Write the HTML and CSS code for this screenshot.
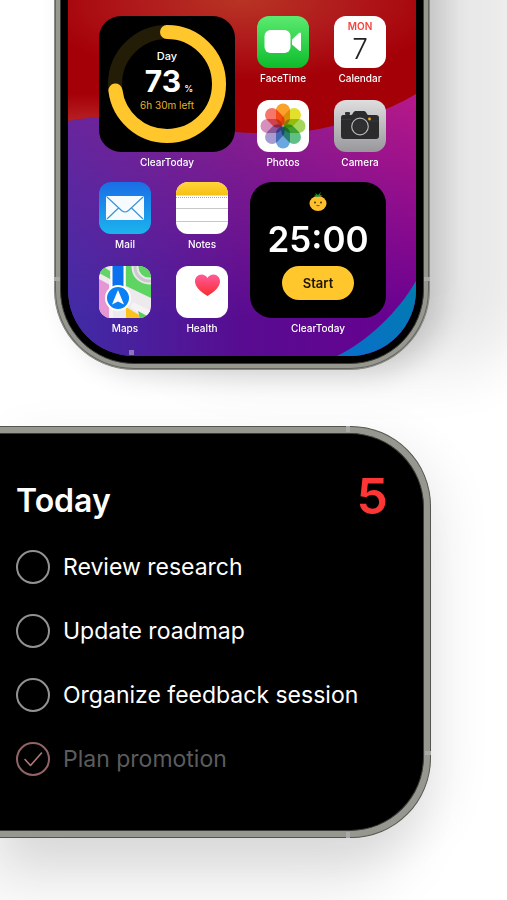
FILE: index.html
```html
<!DOCTYPE html>
<html lang="en">
<head>
    <meta charset="UTF-8">
    <meta name="viewport" content="width=device-width, initial-scale=1">
    <title>ClearToday</title>
    <link rel="stylesheet" href="styles.css">
</head>
<body>
    <main class="showcase">
        <!-- Home screen with widgets -->
        <section class="phone">
            <span class="antenna antenna-left"></span>
            <span class="antenna antenna-right"></span>
            <div class="bezel">
                <div class="screen">
                    <svg class="wallpaper" viewBox="0 0 348 356" preserveAspectRatio="none" aria-hidden="true">
                        <defs>
                            <linearGradient id="purple" x1="0" y1="0" x2="1" y2="0">
                                <stop offset="0" stop-color="#6b259c"/>
                                <stop offset="0.5" stop-color="#8a2090"/>
                                <stop offset="1" stop-color="#b4188a"/>
                            </linearGradient>
                            <linearGradient id="dusk" x1="0" y1="0" x2="1" y2="0">
                                <stop offset="0" stop-color="#402ca6"/>
                                <stop offset="0.5" stop-color="#580c90"/>
                                <stop offset="1" stop-color="#680090"/>
                            </linearGradient>
                            <linearGradient id="fade" x1="0" y1="0" x2="0" y2="1">
                                <stop offset="0.3" stop-color="#000"/>
                                <stop offset="0.9" stop-color="#fff"/>
                            </linearGradient>
                            <mask id="dusk-mask">
                                <rect width="348" height="356" fill="url(#fade)"/>
                            </mask>
                            <radialGradient id="red" cx="0.5" cy="0" r="0.6">
                                <stop offset="0" stop-color="#b83424"/>
                                <stop offset="0.5" stop-color="#b01a1c"/>
                                <stop offset="1" stop-color="#a40008"/>
                            </radialGradient>
                            <radialGradient id="glow" cx="0.05" cy="1" r="0.3">
                                <stop offset="0" stop-color="#c63a38" stop-opacity="0.8"/>
                                <stop offset="1" stop-color="#c63a38" stop-opacity="0"/>
                            </radialGradient>
                            <linearGradient id="blue" x1="1" y1="0" x2="0" y2="1">
                                <stop offset="0" stop-color="#007cae"/>
                                <stop offset="1" stop-color="#0a6ecb"/>
                            </linearGradient>
                        </defs>
                        <rect width="348" height="356" fill="url(#purple)"/>
                        <rect width="348" height="356" fill="url(#dusk)" mask="url(#dusk-mask)"/>
                        <path d="M0 0H348V94C318 112 280 124 240 131C222 134 196 134 167 132C120 117 50 111 0 121Z" fill="url(#red)"/>
                        <path d="M0 0H348V94C318 112 280 124 240 131C222 134 196 134 167 132C120 117 50 111 0 121Z" fill="url(#glow)"/>
                        <path d="M348 281C330 312 300 341 269 356H348Z" fill="url(#blue)"/>
                    </svg>
                    <span class="speck"></span>
                    <div class="home-grid">
                        <a class="widget-link" href="#">
                            <span class="widget day-widget">
                                <svg class="ring" viewBox="0 0 136 136" aria-hidden="true">
                                    <circle cx="68" cy="68" r="52" fill="none" stroke="#231c06" stroke-width="14"/>
                                    <circle cx="68" cy="68" r="52" fill="none" stroke="#ffc72c" stroke-width="14" stroke-linecap="round" pathLength="100" stroke-dasharray="73 100" transform="rotate(-90 68 68)"/>
                                </svg>
                                <span class="day-text">
                                    <span class="day-title">Day</span>
                                    <span class="day-value">73<small>%</small></span>
                                    <span class="day-left">6h 30m left</span>
                                </span>
                            </span>
                            <span class="name">ClearToday</span>
                        </a>

                        <div class="apps apps-right">
                            <a class="app" href="#">
                                <svg class="icon" viewBox="0 0 52 52" aria-hidden="true">
                                    <defs>
                                        <linearGradient id="facetime" x1="0" y1="0" x2="0" y2="1">
                                            <stop offset="0" stop-color="#5bea70"/>
                                            <stop offset="1" stop-color="#0dbd2b"/>
                                        </linearGradient>
                                    </defs>
                                    <rect width="52" height="52" fill="url(#facetime)"/>
                                    <rect x="7.5" y="14" width="26" height="23" rx="6" fill="#fff"/>
                                    <path d="M35 23.5L42 17Q44 15.500 44 18V33.500Q44 36 42 34.500L35 28.500Z" fill="#fff"/>
                                </svg>
                                <span class="name">FaceTime</span>
                            </a>
                            <a class="app" href="#">
                                <span class="icon calendar">
                                    <span class="weekday">MON</span>
                                    <span class="date">7</span>
                                </span>
                                <span class="name">Calendar</span>
                            </a>
                            <a class="app" href="#">
                                <svg class="icon" viewBox="0 0 52 52" aria-hidden="true">
                                    <rect width="52" height="52" fill="#fff"/>
                                    <g class="petals" transform="translate(26 26)">
                                        <rect x="-7" y="-22.500" width="14" height="22" rx="7" fill="#fba22c"/>
                                        <rect x="-7" y="-22.500" width="14" height="22" rx="7" fill="#e3e02c" transform="rotate(45)"/>
                                        <rect x="-7" y="-22.500" width="14" height="22" rx="7" fill="#a5d65c" transform="rotate(90)"/>
                                        <rect x="-7" y="-22.500" width="14" height="22" rx="7" fill="#5fbf85" transform="rotate(135)"/>
                                        <rect x="-7" y="-22.500" width="14" height="22" rx="7" fill="#6ba8e0" transform="rotate(180)"/>
                                        <rect x="-7" y="-22.500" width="14" height="22" rx="7" fill="#a79cd0" transform="rotate(225)"/>
                                        <rect x="-7" y="-22.500" width="14" height="22" rx="7" fill="#d690bd" transform="rotate(270)"/>
                                        <rect x="-7" y="-22.500" width="14" height="22" rx="7" fill="#f7766c" transform="rotate(315)"/>
                                    </g>
                                </svg>
                                <span class="name">Photos</span>
                            </a>
                            <a class="app" href="#">
                                <svg class="icon" viewBox="0 0 52 52" aria-hidden="true">
                                    <defs>
                                        <linearGradient id="camera" x1="0" y1="0" x2="0" y2="1">
                                            <stop offset="0" stop-color="#dededf"/>
                                            <stop offset="1" stop-color="#98989c"/>
                                        </linearGradient>
                                    </defs>
                                    <rect width="52" height="52" fill="url(#camera)"/>
                                    <rect x="11" y="12" width="5" height="3" rx="1" fill="#333"/>
                                    <path d="M9 15H17C19 15 19 11 21.500 11H30C32.500 11 32.500 15 34.500 15H42Q45 15 45 18V36Q45 39 42 39H10Q7 39 7 36V18Q7 15 9 15Z" fill="#2b2b2d"/>
                                    <path d="M7 19.500H17M35 21H45" stroke="#444" stroke-width="0.500"/>
                                    <circle cx="26" cy="26.500" r="10" fill="#2b2b2d"/>
                                    <circle cx="26" cy="26.500" r="8.300" fill="none" stroke="#b5b5b5" stroke-width="1.200"/>
                                    <circle cx="26" cy="26.500" r="6.500" fill="#303033"/>
                                    <circle cx="35.500" cy="19" r="1.400" fill="#f5ac20"/>
                                </svg>
                                <span class="name">Camera</span>
                            </a>
                        </div>

                        <div class="apps">
                            <a class="app" href="#">
                                <svg class="icon" viewBox="0 0 52 52" aria-hidden="true">
                                    <defs>
                                        <linearGradient id="mail" x1="0" y1="0" x2="0" y2="1">
                                            <stop offset="0" stop-color="#1b6de6"/>
                                            <stop offset="1" stop-color="#1bb4ee"/>
                                        </linearGradient>
                                    </defs>
                                    <rect width="52" height="52" fill="url(#mail)"/>
                                    <rect x="7" y="14" width="38" height="24" rx="1.500" fill="#f5fbfe"/>
                                    <path d="M8 15L22.500 28.500Q26 31.500 29.500 28.500L44 15M8 37L19.500 26M44 37L32.500 26" fill="none" stroke="#3c93d8" stroke-width="1.200"/>
                                </svg>
                                <span class="name">Mail</span>
                            </a>
                            <a class="app" href="#">
                                <svg class="icon" viewBox="0 0 52 52" aria-hidden="true">
                                    <defs>
                                        <linearGradient id="notes" x1="0" y1="0" x2="0" y2="1">
                                            <stop offset="0" stop-color="#ffd43a"/>
                                            <stop offset="1" stop-color="#f7c013"/>
                                        </linearGradient>
                                    </defs>
                                    <rect width="52" height="52" fill="#fff"/>
                                    <rect width="52" height="13.500" fill="url(#notes)"/>
                                    <path d="M0 15.500H52" stroke="#aaa" stroke-dasharray="1 1"/>
                                    <path d="M0 26.500H52M0 39.500H52" stroke="#c8c8c8"/>
                                </svg>
                                <span class="name">Notes</span>
                            </a>
                            <a class="app" href="#">
                                <svg class="icon" viewBox="0 0 52 52" aria-hidden="true">
                                    <rect width="52" height="52" fill="#eee9ec"/>
                                    <path d="M0 0H3L11 5V13L0 7Z" fill="#62d468"/>
                                    <path d="M0 13L11 19V52H0Z" fill="#e696d2"/>
                                    <path d="M10 13L14 15V52H10Z" fill="#f6f2f4"/>
                                    <path d="M27 0H52V32L27 20Z" fill="#5ed463"/>
                                    <circle cx="50" cy="1" r="14" fill="#5ed463" stroke="#e8e6e9" stroke-width="7"/>
                                    <circle cx="50" cy="1" r="14" fill="none" stroke="#ccc9ce" stroke-width="3"/>
                                    <path d="M27 41L45 52H27Z" fill="#fcc21c"/>
                                    <path d="M34 36L52 45V52H49L31 41Z" fill="#f5f3f5"/>
                                    <path d="M39 45L52 52H41Z" fill="#55ce5b"/>
                                    <path d="M12 0H26V30H12Z" fill="#fff"/>
                                    <path d="M13.500 0H24.500V30H13.500Z" fill="#0a72ee"/>
                                    <circle cx="19" cy="32" r="13" fill="#fff"/>
                                    <circle cx="19" cy="32" r="11" fill="#0a80f4"/>
                                    <path d="M19 24L25 38.500L19 35.500L13 38.500Z" fill="#fff"/>
                                </svg>
                                <span class="name">Maps</span>
                            </a>
                            <a class="app" href="#">
                                <svg class="icon" viewBox="0 0 52 52" aria-hidden="true">
                                    <defs>
                                        <linearGradient id="heart" x1="0" y1="0" x2="0" y2="1">
                                            <stop offset="0" stop-color="#ff5c9b"/>
                                            <stop offset="1" stop-color="#f82c2e"/>
                                        </linearGradient>
                                    </defs>
                                    <rect width="52" height="52" fill="#fff"/>
                                    <path d="M31.500 30C28 27.500 19 22.500 19 15.500C19 11.500 21.800 8.500 25.500 8.500C28 8.500 30.300 9.800 31.500 12C32.700 9.800 35 8.500 37.500 8.500C41.200 8.500 44 11.500 44 15.500C44 22.500 35 27.500 31.500 30Z" fill="url(#heart)"/>
                                </svg>
                                <span class="name">Health</span>
                            </a>
                        </div>

                        <div class="widget-link">
                            <div class="widget timer-widget">
                                <svg class="tangerine" viewBox="0 0 18 20" aria-hidden="true">
                                    <ellipse cx="9" cy="11.500" rx="8.500" ry="7.500" fill="#fdbf2d"/>
                                    <path d="M9 5L5 4L7 3L6 1L9 3L12 0L11 3L14 3Z" fill="#179c2c"/>
                                    <circle cx="6" cy="10.500" r="1" fill="#513800"/>
                                    <circle cx="12" cy="10.500" r="1" fill="#513800"/>
                                    <path d="M7 13Q9 15.500 11 13Z" fill="#a14e00"/>
                                </svg>
                                <span class="time">25:00</span>
                                <button class="start" type="button">Start</button>
                            </div>
                            <span class="name">ClearToday</span>
                        </div>
                    </div>
                </div>
            </div>
        </section>

        <!-- Landscape phone with the task list -->
        <section class="board">
            <span class="antenna antenna-top"></span>
            <span class="antenna antenna-bottom"></span>
            <span class="antenna antenna-side"></span>
            <div class="tasks">
                <header class="tasks-header">
                    <h1>Today</h1>
                    <span class="count">5</span>
                </header>
                <ul class="task-list">
                    <li><label class="task"><input type="checkbox"><span>Review research</span></label></li>
                    <li><label class="task"><input type="checkbox"><span>Update roadmap</span></label></li>
                    <li><label class="task"><input type="checkbox"><span>Organize feedback session</span></label></li>
                    <li>
                        <label class="task">
                            <input type="checkbox" checked>
                            <svg class="check" viewBox="0 0 34 34" aria-hidden="true">
                                <path d="M9 17.500L14.500 23.500L25.500 11" fill="none" stroke="#b07a7c" stroke-width="1.600" stroke-linecap="round" stroke-linejoin="round"/>
                            </svg>
                            <span>Plan promotion</span>
                        </label>
                    </li>
                </ul>
            </div>
        </section>
    </main>
</body>
</html>
```

FILE: styles.css
```css
* {
    box-sizing: border-box;
}
body {
    margin: 0;
    font-family: Inter, "Liberation Sans", sans-serif;
    background-color: #fff;
    color: #fff;
}
.showcase {
    display: flex;
    flex-direction: column;
    gap: 56px;
    min-height: 100vh;
    padding-bottom: 62px;
    overflow: hidden;
}

/* phone */
.phone {
    position: relative;
    max-width: 376px;
    width: calc(100% - 131px);
    margin: -100px 0 0 54px;
    padding: 5px;
    border: 1px solid #8a8b84;
    border-radius: 0 0 80px 80px;
    background-color: #96978f;
    box-shadow: inset 0 0 0 1px #64655f, 100px 0 60px rgba(0,0,0,0.09), 14px 4px 28px rgba(0,0,0,0.16);
}
.bezel {
    padding: 93px 7px 7px;
    border: 1px solid #3c3c39;
    border-radius: 0 0 74px 74px;
    background-color: #000;
}
.screen {
    position: relative;
    padding: 10px 30px 18px 31px;
    border-radius: 0 0 66px 66px;
    overflow: hidden;
}
.wallpaper {
    position: absolute;
    inset: 0;
    width: 100%;
    height: 100%;
}
.speck {
    position: absolute;
    left: 61px;
    bottom: 1px;
    width: 5px;
    height: 5px;
    background-color: #8878b8;
}
.home-grid {
    position: relative;
    display: grid;
    grid-template-columns: 1fr 1fr;
    gap: 10px 15px;
    padding-top: 6px;
}
a {
    color: inherit;
    text-decoration: none;
}
.name {
    font-size: 10px;
    font-weight: 500;
    line-height: 20px;
    text-align: center;
    white-space: nowrap;
}
.widget-link {
    display: flex;
    flex-direction: column;
}
.widget {
    position: relative;
    display: flex;
    flex-direction: column;
    align-items: center;
    aspect-ratio: 1;
    border-radius: 22px;
    background-color: #000;
}
.apps {
    display: grid;
    grid-template-columns: 52px 52px;
    gap: 12px 25px;
    align-content: space-between;
}
.apps-right {
    justify-content: end;
}
.app {
    display: flex;
    flex-direction: column;
    align-items: center;
}
.icon {
    display: block;
    width: 52px;
    height: 52px;
    border-radius: 12px;
}
.petals rect {
    mix-blend-mode: multiply;
}
.calendar {
    display: flex;
    flex-direction: column;
    align-items: center;
    padding-top: 4px;
    background-color: #fff;
}
.weekday {
    font-size: 10px;
    font-weight: 600;
    line-height: 12px;
    color: #f4433c;
}
.date {
    font-size: 28px;
    font-weight: 300;
    line-height: 34px;
    color: #222;
}

/* widgets */
.day-widget {
    justify-content: center;
}
.ring {
    position: absolute;
    inset: 0;
}
.day-text {
    display: flex;
    flex-direction: column;
    align-items: center;
    padding-bottom: 8px;
}
.day-title {
    font-size: 11px;
    font-weight: 500;
    line-height: 14px;
}
.day-value {
    display: flex;
    align-items: baseline;
    gap: 3px;
    padding-left: 4px;
    font-size: 30px;
    font-weight: 700;
    line-height: 36px;
}
.day-value small {
    font-size: 9px;
    font-weight: 500;
    line-height: 12px;
}
.day-left {
    font-size: 10px;
    line-height: 12px;
    color: #e9b12a;
}
.timer-widget {
    gap: 8px;
    padding-top: 10px;
}
.tangerine {
    width: 18px;
    height: 20px;
}
.time {
    font-size: 35px;
    font-weight: 600;
    line-height: 38px;
}
.start {
    width: 72px;
    height: 34px;
    padding: 0;
    border: none;
    border-radius: 17px;
    background-color: #ffc72c;
    color: #1c1400;
    font-family: inherit;
    font-size: 13px;
    font-weight: 600;
    cursor: pointer;
}

/* task list */
.board {
    position: relative;
    margin-right: 76px;
    padding: 6px 6px 6px 0;
    border: 1px solid #55554f;
    border-left: none;
    border-radius: 0 80px 80px 0;
    background-color: #96978f;
    box-shadow: -20px 50px 60px rgba(0,0,0,0.1), 14px 14px 50px rgba(0,0,0,0.08);
}
.tasks {
    padding: 37px 35px 39px 16px;
    border: 1px solid #3c3c39;
    border-left: none;
    border-radius: 0 74px 74px 0;
    background-color: #000;
}
.tasks-header {
    display: flex;
    justify-content: space-between;
    align-items: flex-start;
    height: 64px;
}
h1 {
    margin: 0;
    font-size: 32px;
    font-weight: 600;
    line-height: 60px;
}
.count {
    font-size: 50px;
    font-weight: 600;
    line-height: 50px;
    color: #fc3535;
}
.task-list {
    margin: 0;
    padding: 0;
    list-style: none;
}
.task {
    position: relative;
    display: flex;
    align-items: center;
    gap: 13px;
    height: 64px;
    font-size: 23px;
    cursor: pointer;
}
.task input {
    appearance: none;
    width: 34px;
    height: 34px;
    margin: 0;
    border: 2px solid #929292;
    border-radius: 50%;
}
.task input:checked {
    border-color: #936466;
}
.task input:checked ~ span {
    color: #5c5c5c;
}
.check {
    position: absolute;
    left: 0;
    width: 34px;
    height: 34px;
}

/* antenna lines on the frames */
.antenna {
    position: absolute;
    width: 6px;
    height: 4px;
    background-color: #a9aaa8;
}
.antenna-left {
    left: -1px;
    bottom: 88px;
}
.antenna-right {
    right: -1px;
    bottom: 88px;
}
.antenna-top,
.antenna-bottom {
    right: 80px;
    width: 4px;
    height: 6px;
}
.antenna-top {
    top: -1px;
}
.antenna-bottom {
    bottom: -1px;
}
.antenna-side {
    right: -1px;
    bottom: 82px;
}
```
